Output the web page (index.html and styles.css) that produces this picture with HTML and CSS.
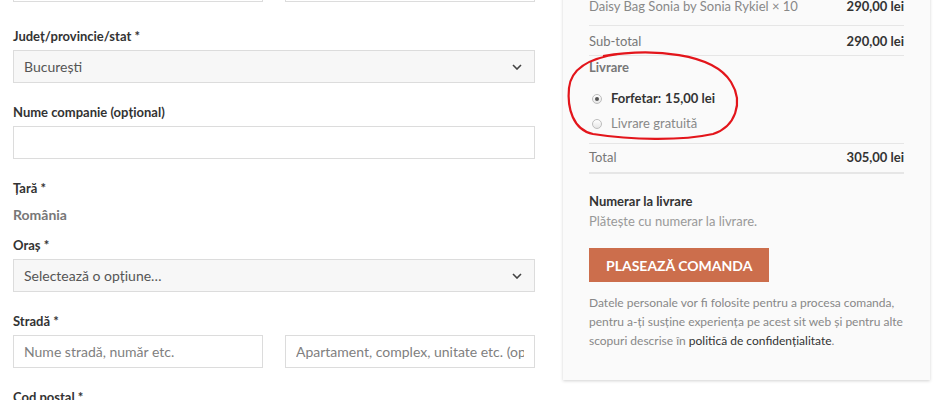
FILE: index.html
```html
<!DOCTYPE html>
<html lang="ro">
<head>
  <meta charset="UTF-8">
  <title>Finalizare comandă</title>
  <link rel="stylesheet" href="styles.css">
</head>
<body>
  <div class="checkout">
    <div class="billing">
      <div class="row two first">
        <div>
          <label>Prenume *</label>
          <input type="text" class="input">
        </div>
        <div>
          <label>Nume *</label>
          <input type="text" class="input">
        </div>
      </div>

      <div class="row">
        <label>Județ/provincie/stat *</label>
        <div class="select">
          <span>București</span>
          <svg width="10" height="6" viewBox="0 0 10 6"><path d="M1 1l4 4 4-4" fill="none" stroke="#444" stroke-width="1.6"/></svg>
        </div>
      </div>

      <div class="row">
        <label>Nume companie (opțional)</label>
        <input type="text" class="input">
      </div>

      <div class="row">
        <label>Țară *</label>
        <strong class="country">România</strong>
        <label>Oraș *</label>
        <div class="select">
          <span>Selectează o opțiune…</span>
          <svg width="10" height="6" viewBox="0 0 10 6"><path d="M1 1l4 4 4-4" fill="none" stroke="#444" stroke-width="1.6"/></svg>
        </div>
      </div>

      <div class="row">
        <label>Stradă *</label>
        <div class="two">
          <input type="text" class="input" placeholder="Nume stradă, număr etc.">
          <input type="text" class="input" placeholder="Apartament, complex, unitate etc. (opțional)">
        </div>
      </div>

      <div class="row">
        <label>Cod poștal *</label>
        <input type="text" class="input">
      </div>
    </div>

    <div class="review">
      <svg class="circle" width="180" height="96" viewBox="0 0 180 96">
        <path d="M40 8 C90 0 150 5 168 34 C181 55 172 79 150 86 C118 93 68 92 30 86 C10 82 4 60 6 40 C8 20 26 10 56 6" fill="none" stroke="#e3151b" stroke-width="2.2"/>
      </svg>

      <div class="line head"><span>Produs</span><span>Subtotal</span></div>
      <div class="line item"><span class="name">Daisy Bag Sonia by Sonia Rykiel × 10</span><b>290,00 lei</b></div>
      <div class="line sub"><span>Sub-total</span><b>290,00 lei</b></div>
      <div class="shipping">
        <div class="ship-title">Livrare</div>
        <ul>
          <li class="on"><i class="radio"></i>Forfetar: <span>15,00 lei</span></li>
          <li><i class="radio"></i>Livrare gratuită</li>
        </ul>
      </div>
      <div class="line total"><span>Total</span><b>305,00 lei</b></div>

      <div class="payment">
        <h4>Numerar la livrare</h4>
        <p class="hint">Plătește cu numerar la livrare.</p>
        <button class="order">Plasează comanda</button>
        <p class="privacy">Datele personale vor fi folosite pentru a procesa comanda, pentru a-ți susține experiența pe acest sit web și pentru alte scopuri descrise în <a href="#">politică de confidențialitate</a>.</p>
      </div>
    </div>
  </div>
</body>
</html>
```

FILE: styles.css
```css
body {
  margin: 0;
  font-family: Lato, "Open Sans", sans-serif;
  background-color: #fff;
  color: #333;
  overflow: hidden;
}
.checkout {
  display: flex;
  align-items: flex-start;
  gap: 28px;
  margin-top: -55px;
  padding-left: 13px;
}
.billing {
  width: 522px;
  flex-shrink: 0;
}
.row {
  margin-bottom: 19px;
}
.row.first {
  margin-bottom: 24px;
}
.two {
  display: grid;
  grid-template-columns: 1fr 1fr;
  gap: 22px;
}
label {
  display: block;
  font-size: 13px;
  font-weight: bold;
  line-height: 20px;
  margin-bottom: 4px;
  color: #333;
}
.input {
  display: block;
  box-sizing: border-box;
  width: 100%;
  height: 33px;
  padding: 0 10px;
  border: 1px solid #dcdcdc;
  background: #fff;
  font-family: inherit;
  font-size: 14px;
  color: #555;
  outline: none;
}
.input::placeholder {
  color: #808080;
}
.select {
  display: flex;
  justify-content: space-between;
  align-items: center;
  box-sizing: border-box;
  height: 33px;
  padding: 0 12px 0 10px;
  border: 1px solid #dcdcdc;
  background: #f7f7f7;
  font-size: 14px;
  color: #555;
}
.country {
  display: block;
  font-size: 14px;
  line-height: 26px;
  color: #777;
  margin-bottom: 7px;
}

.review {
  position: relative;
  width: 367px;
  box-sizing: border-box;
  padding: 18px 26px 30px;
  background: #fafafa;
  box-shadow: 0 1px 3px rgba(0, 0, 0, 0.18);
  font-size: 13px;
}
.circle {
  position: absolute;
  left: 0;
  top: 103px;
}
.line {
  display: flex;
  justify-content: space-between;
  line-height: 16px;
  padding: 6px 0;
  border-bottom: 1px solid #e6e6e6;
  color: #777;
}
.line b {
  color: #333;
}
.item { padding-bottom: 11px; }
.item .name { color: #888; }
.sub { padding: 7px 0 6px; }
.shipping {
  padding: 3px 0 7px;
  border-bottom: 1px solid #e6e6e6;
}
.ship-title {
  line-height: 16px;
  font-weight: bold;
  color: #777;
}
.shipping ul {
  list-style: none;
  margin: 11px 0 0;
  padding: 0;
}
.shipping li {
  display: flex;
  align-items: center;
  line-height: 25px;
  padding-left: 3px;
  color: #888;
}
.shipping li.on {
  color: #333;
  font-weight: bold;
}
.shipping li span {
  margin-left: 4px;
}
.radio {
  width: 10px;
  height: 10px;
  margin-right: 9px;
  border: 1px solid #bdbdbd;
  border-radius: 50%;
  background: linear-gradient(#fff, #e6e6e6);
  box-sizing: border-box;
  position: relative;
}
.on .radio::after {
  content: "";
  position: absolute;
  left: 2px;
  top: 2px;
  width: 4px;
  height: 4px;
  border-radius: 50%;
  background: #555;
}
.total {
  padding: 5px 0 7px;
  border-bottom: 2px solid #e6e6e6;
}
.payment h4 {
  margin: 18px 0 2px;
  font-size: 13px;
  line-height: 18px;
  color: #333;
}
.hint {
  margin: 0;
  line-height: 18px;
  color: #999;
}
.order {
  display: block;
  margin-top: 18px;
  height: 34px;
  padding: 0 17px;
  border: none;
  background: #cc6e4c;
  color: #fff;
  font-family: inherit;
  font-size: 14px;
  font-weight: bold;
  text-transform: uppercase;
  cursor: pointer;
}
.privacy {
  margin: 11px 0 0;
  font-size: 12px;
  line-height: 19px;
  color: #888;
}
.privacy a {
  color: #333;
  text-decoration: none;
}
```
